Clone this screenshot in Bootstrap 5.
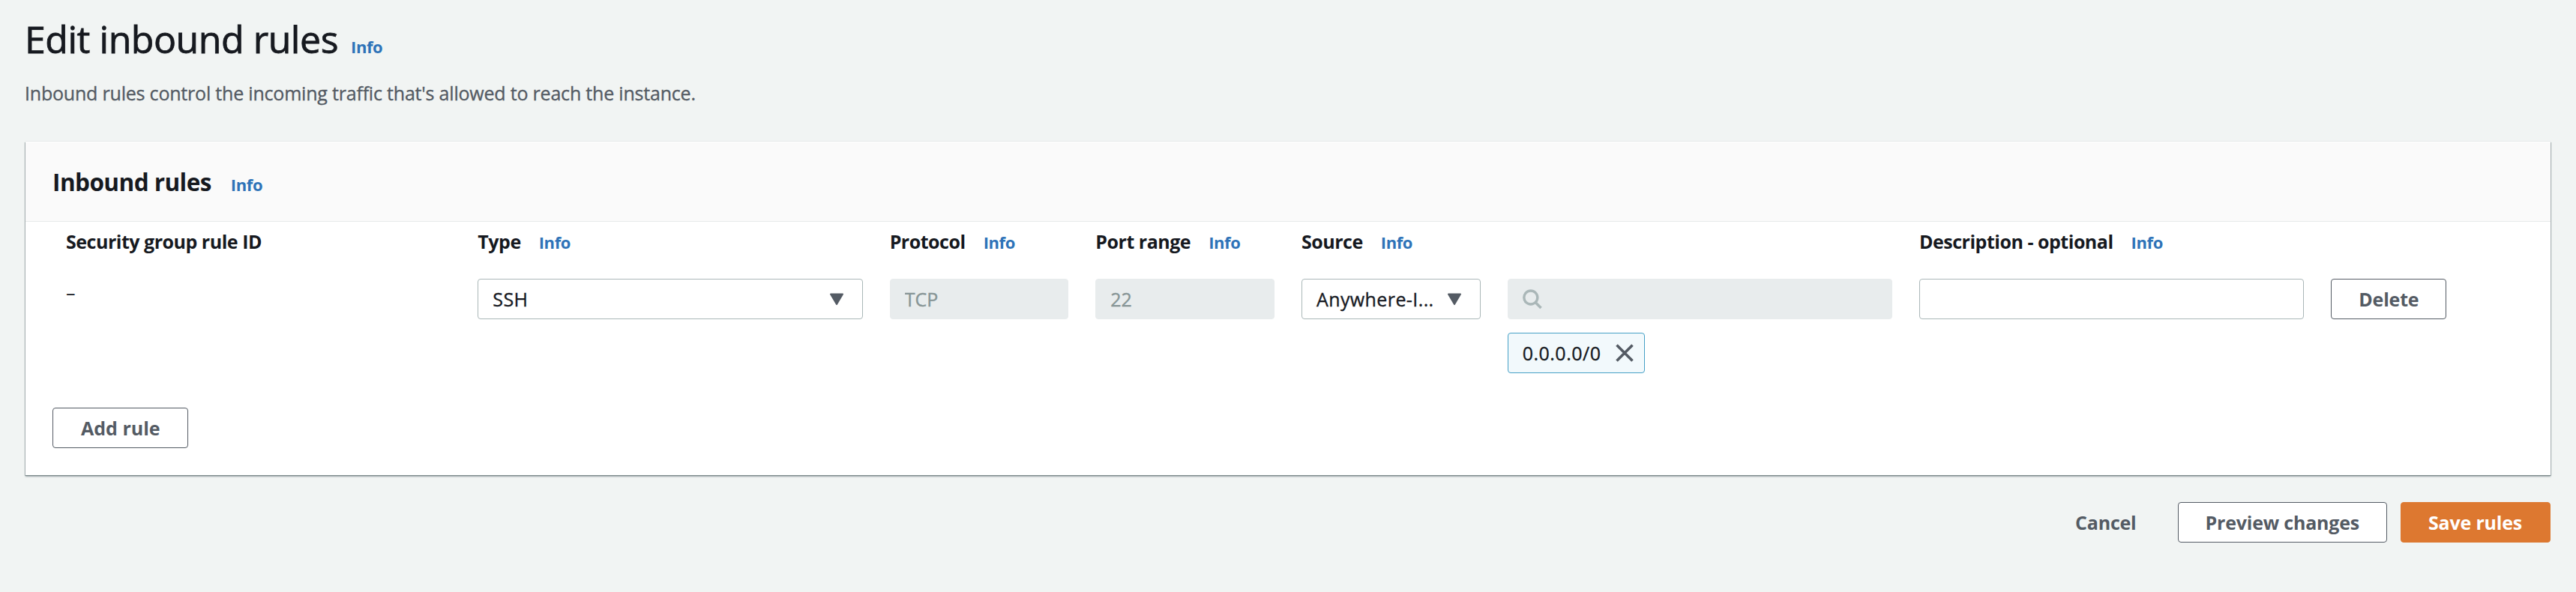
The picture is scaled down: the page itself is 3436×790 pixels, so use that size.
<!DOCTYPE html>
<html lang="en">
<head>
<meta charset="utf-8">
<title>Edit inbound rules</title>
<link href="https://cdn.jsdelivr.net/npm/bootstrap@5.3.0/dist/css/bootstrap.min.css" rel="stylesheet">
<style>
body{background:#f1f4f3;color:#16191f;font-family:"Open Sans","Noto Sans",sans-serif;font-size:25px;line-height:36px}
.page{padding:22px 34px 0}
.page-title{font-size:50px;line-height:60px;height:62px;font-weight:400;letter-spacing:-.46px;margin-left:-1px}
.page-title>span{-webkit-text-stroke:.8px currentColor}
.page-sub,.form-control,.pick>span,.token>span{-webkit-text-stroke:.35px currentColor}
.page-sub{color:#545b64;margin:22px 0 47px -1px;letter-spacing:-.2px}
.info-link{color:#2e73b8;font-size:22px;font-weight:700;text-decoration:none;letter-spacing:-.4px;margin-left:24px}
.page-title .info-link{margin-left:17px}
.panel{background:#fff;border:0;border-radius:0;height:445px;box-shadow:0 -1px 0 #e6eaea,0 1px 1px #7f8b8d,0 2px 2px #a5afb0,1px 1px 1px #b8c0c0,-1px 1px 1px #b8c0c0}
.panel-head{background:#fafafa;border-bottom:1px solid #e8eaea;border-top:1px solid #fff;height:107px;padding:0 36px}
.panel-head h2{font-size:31.5px;font-weight:700;letter-spacing:-.55px}
.panel-head .info-link{margin-left:26px}
.panel-body{padding:8px 36px 36px}
.rule-grid{--bs-gutter-x:36px;margin:0}
.col-head{font-weight:700;letter-spacing:-.48px;height:36px;margin-bottom:32px;white-space:nowrap}
.form-control,.form-select,.btn{height:54px;border-radius:4px;font-size:25px;line-height:50px;padding-top:1px;padding-bottom:1px}
.form-control,.form-select{border-color:#aab7b8;color:#16191f;padding-left:19px;background-image:none;letter-spacing:.4px}
.form-control:disabled{background:#e8eced;border-color:#e8eced;color:#879596;letter-spacing:0}
.pick{display:flex;align-items:center;justify-content:space-between;padding-right:24px;background:#fff}
.btn{font-weight:700;color:#545b64;padding-left:36px;padding-right:36px;letter-spacing:-.2px}
.btn-line{border-color:#545b64;background:#fff}
.btn-save{background:#dd7830;border-color:#dd7830;color:#fff;padding-right:37px}
.add-btn{margin-top:46px;padding-left:37px;letter-spacing:0}
.search-box{background:#e8eced;border-color:#e8eced;display:flex;align-items:center}
.token{display:inline-flex;align-items:center;height:54px;margin-top:18px;padding:0 14px 0 19px;border:1px solid #45a0c6;border-radius:4px;background:#f2f9fc;letter-spacing:.5px}
.token svg{margin-left:20px}
.foot{margin-top:36px;gap:18px}
</style>
</head>
<body>
<main class="page">
<h1 class="page-title mb-0"><span>Edit inbound rules</span><a class="info-link" href="#">Info</a></h1>
<p class="page-sub">Inbound rules control the incoming traffic that's allowed to reach the instance.</p>
<section class="card panel">
 <div class="panel-head d-flex align-items-center"><h2 class="mb-0"><span>Inbound rules</span><a class="info-link" href="#">Info</a></h2></div>
 <div class="panel-body">
  <div class="row rule-grid">
   <div class="col-2"><div class="col-head">Security group rule ID</div><div>–</div></div>
   <div class="col-2"><div class="col-head">Type<a class="info-link" href="#">Info</a></div>
    <div class="form-select pick"><span>SSH</span><svg width="20" height="17" viewBox="0 0 20 17"><path d="M2 1.5H18L10 15Z" fill="#545b64" stroke="#545b64" stroke-width="2" stroke-linejoin="round"/></svg></div></div>
   <div class="col-1"><div class="col-head">Protocol<a class="info-link" href="#">Info</a></div><input class="form-control" value="TCP" disabled></div>
   <div class="col-1"><div class="col-head">Port range<a class="info-link" href="#">Info</a></div><input class="form-control" value="22" disabled></div>
   <div class="col-1"><div class="col-head">Source<a class="info-link" href="#">Info</a></div>
    <div class="form-select pick"><span>Anywhere-I...</span><svg width="20" height="17" viewBox="0 0 20 17"><path d="M2 1.5H18L10 15Z" fill="#545b64" stroke="#545b64" stroke-width="2" stroke-linejoin="round"/></svg></div></div>
   <div class="col-2"><div class="col-head">&nbsp;</div>
    <div class="form-control search-box"><svg width="27" height="28" viewBox="0 0 27 28" fill="none" stroke="#aab7b8"><circle cx="10.8" cy="12" r="9" stroke-width="3.4"/><path d="M17 18.5L24.5 26" stroke-width="3.6"/></svg></div>
    <div class="token"><span>0.0.0.0/0</span><svg width="24" height="24" viewBox="0 0 24 24"><path d="M1.5 1.5L22.5 22.5M22.5 1.5L1.5 22.5" stroke="#545b64" stroke-width="3.6"/></svg></div></div>
   <div class="col-2"><div class="col-head">Description - optional<a class="info-link" href="#">Info</a></div><input class="form-control"></div>
   <div class="col-1"><div class="col-head">&nbsp;</div><button class="btn btn-line">Delete</button></div>
  </div>
  <button class="btn btn-line add-btn">Add rule</button>
 </div>
</section>
<div class="foot d-flex justify-content-end"><button class="btn">Cancel</button><button class="btn btn-line">Preview changes</button><button class="btn btn-save ms-0">Save rules</button></div>
</main>
</body></html>
